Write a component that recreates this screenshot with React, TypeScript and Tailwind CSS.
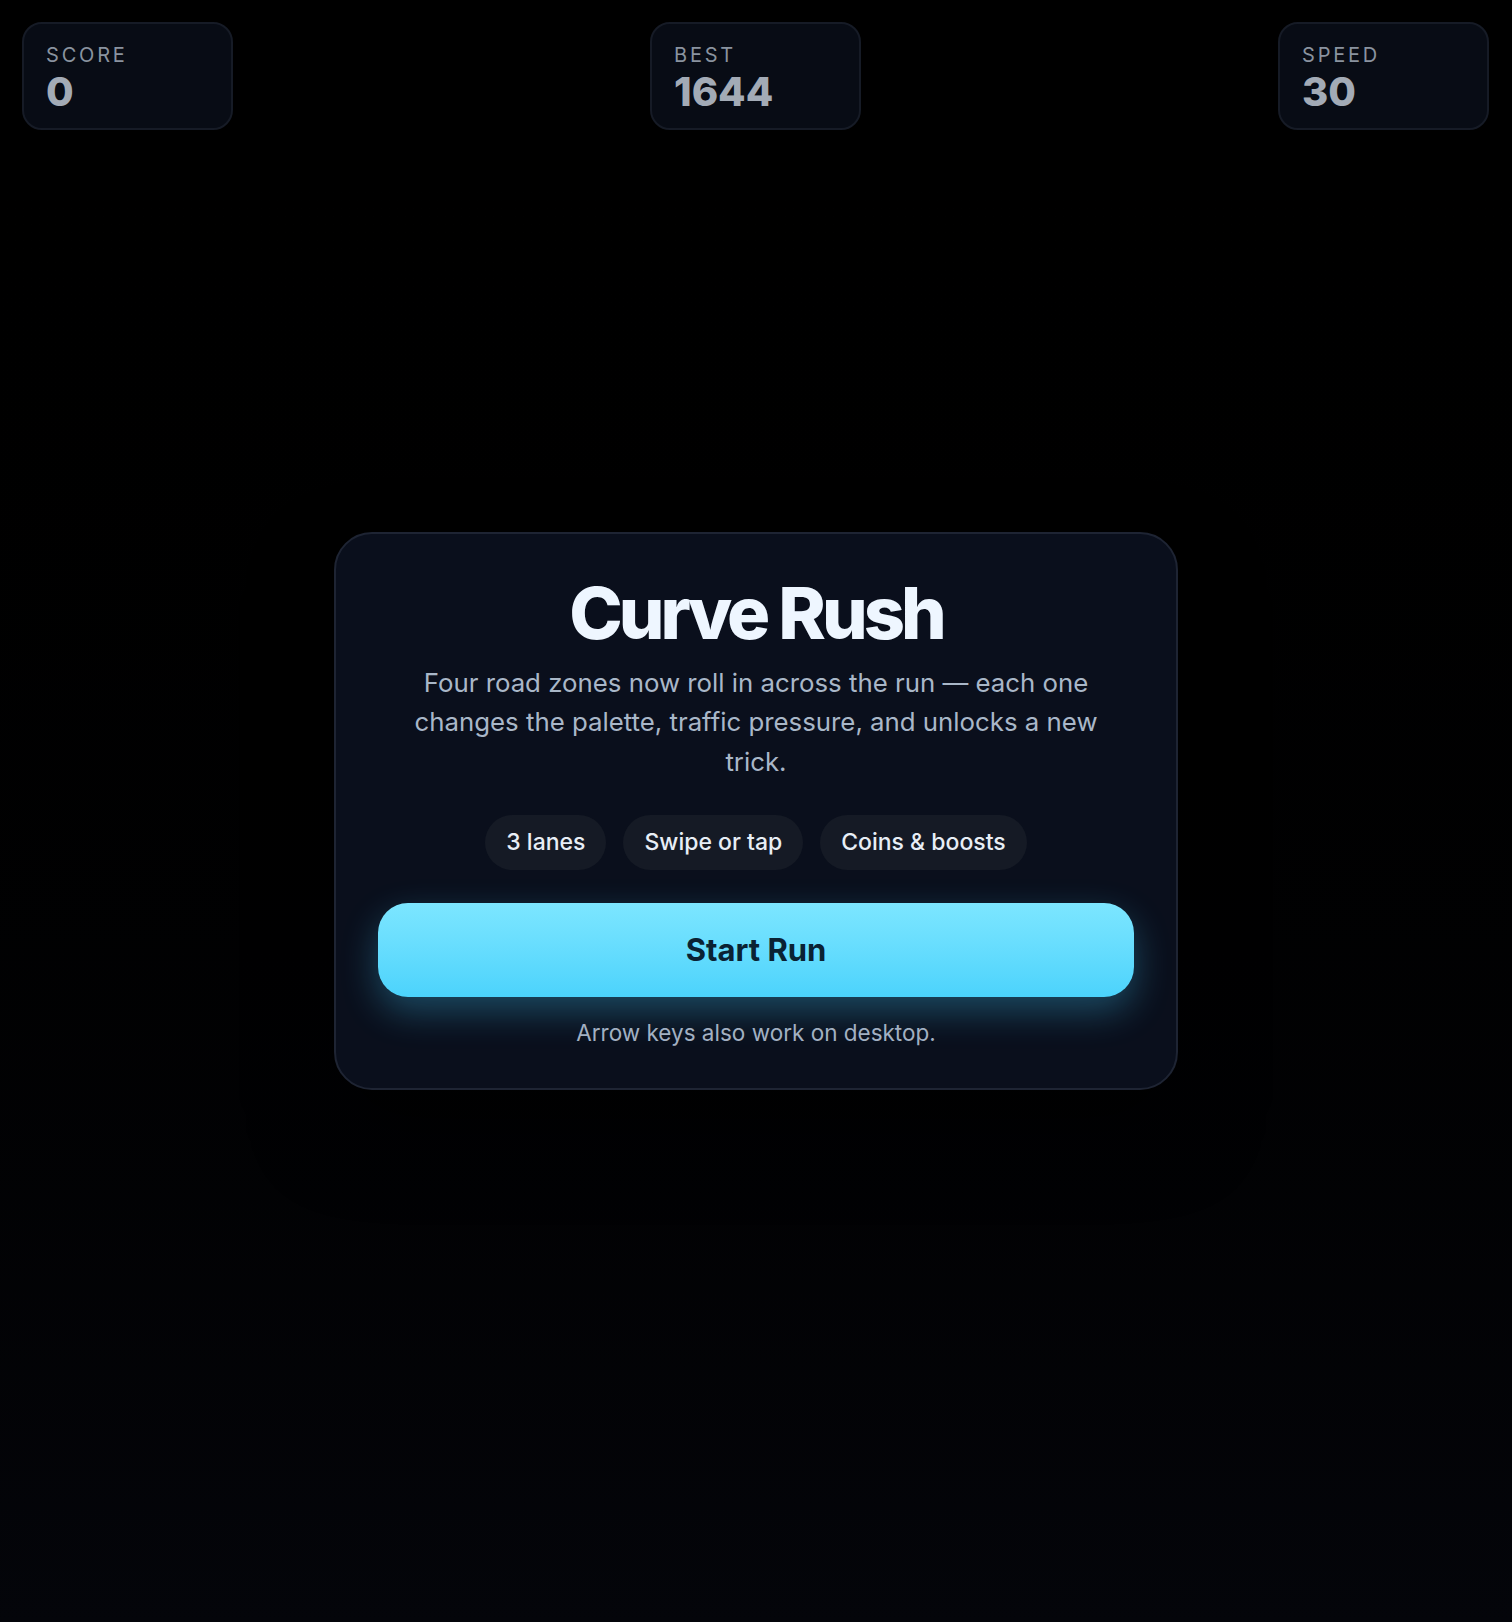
import React from 'react';

const stats = [
  { label: 'SCORE', value: '0' },
  { label: 'BEST', value: '1644' },
  { label: 'SPEED', value: '30' },
];

const chips = ['3 lanes', 'Swipe or tap', 'Coins & boosts'];

function StatCard({ label, value }: { label: string; value: string }) {
  return (
    <div className="w-[211px] h-[108px] rounded-[20px] border-2 border-[#161b26] bg-[#080c15] px-[22px] pt-[19px]">
      <div className="text-[20px] leading-6 tracking-[0.14em] text-[#8a939f]">{label}</div>
      <div className="mt-[5px] text-[40px] leading-10 font-extrabold text-[#a3abb6]">{value}</div>
    </div>
  );
}

export default function App() {
  return (
    <div
      className="relative h-screen w-full overflow-hidden bg-gradient-to-b from-[#000000] to-[#04050a] flex items-center justify-center"
      style={{ fontFamily: 'Inter, "Noto Sans", sans-serif' }}
    >
      {/* HUD */}
      <div className="absolute top-[22px] left-[22px] right-[23px] flex justify-between">
        {stats.map((s) => (
          <StatCard key={s.label} label={s.label} value={s.value} />
        ))}
      </div>

      {/* start overlay */}
      <div className="w-[844px] rounded-[38px] border-2 border-[#1e2433] bg-[#0a0f1c] px-[42px] pt-[43px] pb-[40px] text-center shadow-[0_40px_80px_rgba(0,0,0,0.55)]">
        <h1 className="text-[72px] leading-[72px] font-extrabold tracking-[-0.055em] text-[#eef6ff]">Curve Rush</h1>
        <p className="mx-auto mt-[14px] max-w-[730px] text-[25.8px] leading-[39.5px] text-[#a9b7c8]">
          Four road zones now roll in across the run — each one changes the palette, traffic pressure, and unlocks a new trick.
        </p>
        <div className="mt-[34px] flex justify-center gap-[17px]">
          {chips.map((c) => (
            <span
              key={c}
              className="h-[55px] rounded-full bg-[#151a25] px-[21px] text-[23px] leading-[55px] font-medium text-[#e8eef6]"
            >
              {c}
            </span>
          ))}
        </div>
        <button className="mt-[33px] h-[94px] w-full rounded-[30px] bg-gradient-to-b from-[#7ce6ff] to-[#4bd3fc] text-[31px] font-bold text-[#0a2233] shadow-[0_14px_36px_rgba(64,200,250,0.32)]">
          Start Run
        </button>
        <p className="mt-[21px] text-[22.5px] leading-[30px] text-[#a2b0c2]">Arrow keys also work on desktop.</p>
      </div>
    </div>
  );
}
